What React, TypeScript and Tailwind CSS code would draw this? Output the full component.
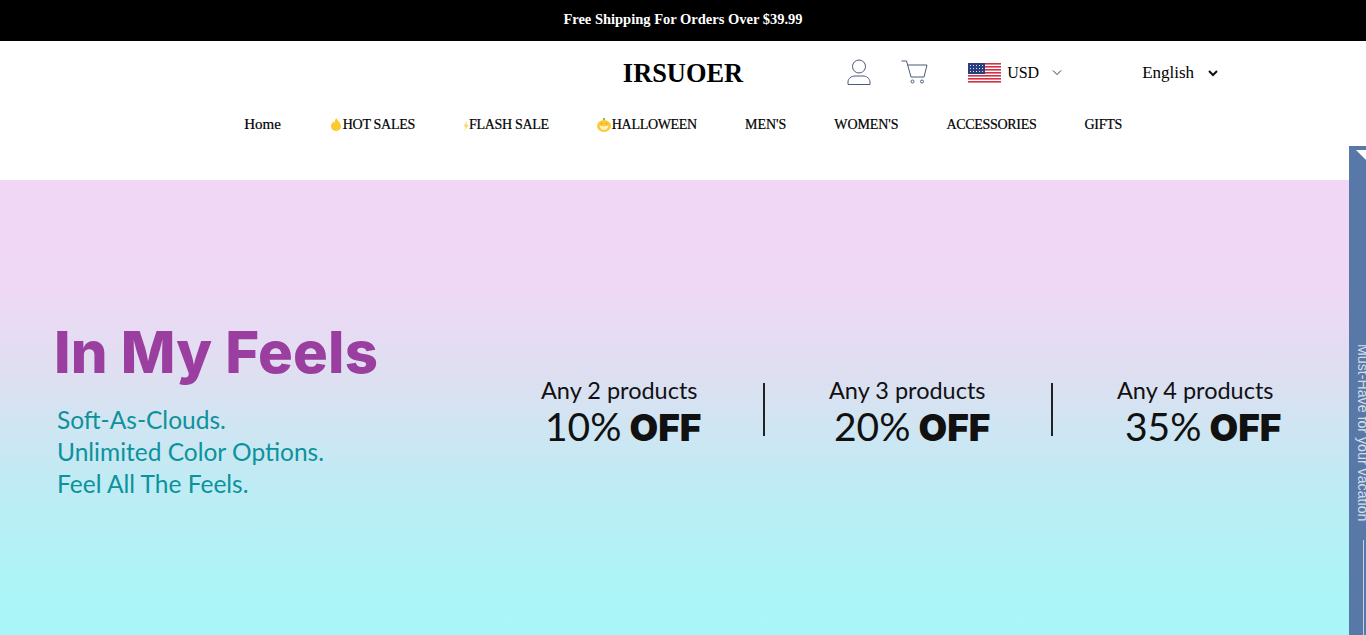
import React from 'react';

const serif = "font-['Liberation_Serif',serif]";

const navItems = [
  { label: 'Home', icon: null, style: 'text-[15px] leading-[18px]' },
  { label: 'HOT SALES', icon: 'fire', style: 'text-[14px] leading-[20px] tracking-[-0.3px]' },
  { label: 'FLASH SALE', icon: 'bolt', style: 'text-[14px] leading-[20px] tracking-[-0.3px]' },
  { label: 'HALLOWEEN', icon: 'pumpkin', style: 'text-[14px] leading-[20px] tracking-[-0.3px]' },
  { label: "MEN'S", icon: null, style: 'text-[14px] leading-[20px]' },
  { label: "WOMEN'S", icon: null, style: 'text-[14px] leading-[20px] tracking-[-0.1px]' },
  { label: 'ACCESSORIES', icon: null, style: 'text-[14px] leading-[20px] tracking-[-0.3px]' },
  { label: 'GIFTS', icon: null, style: 'text-[14px] leading-[20px] tracking-[-0.3px]' },
];

const offers = [
  { title: 'Any 2 products', percent: '10%', indent: 'pl-[4px]' },
  { title: 'Any 3 products', percent: '20%', indent: 'pl-[5px]' },
  { title: 'Any 4 products', percent: '35%', indent: 'pl-[8px]' },
];

const NavIcon = ({ name }: { name: string | null }) => {
  if (name === 'fire') {
    return (
      <svg width="10" height="13" viewBox="0 0 10 13" className="ml-[2px] mr-[2px] -mt-[1px]">
        <path d="M5.500 0C5.500 2 10 4.500 10 8.300 10 11 7.800 13 5 13 2.200 13 0 11 0 8.300 0 6 1.400 4.800 2.300 3.600 2.600 4.500 3 4.900 3.500 5 3.600 3 4.200 1 5.500 0Z" fill="#fdc92f" />
      </svg>
    );
  }
  if (name === 'bolt') {
    return (
      <svg width="6" height="10" viewBox="0 0 7 10" preserveAspectRatio="none" className="mt-[2px]">
        <path d="M5 0 0.500 5.500H3L1.500 10 6.500 4H4Z" fill="#fcd75f" />
      </svg>
    );
  }
  if (name === 'pumpkin') {
    return (
      <svg width="14" height="14" viewBox="0 0 14 14" className="mr-[1px]">
        <rect x="6" y="0" width="2" height="3" fill="#7ac943" />
        <ellipse cx="7" cy="8" rx="7" ry="6" fill="#fdc93a" />
        <path d="M2.500 7.500C4 8.500 10 8.500 11.500 7.500 11 10.500 9 12 7 12 5 12 3 10.500 2.500 7.500Z" fill="#fff3c4" />
        <circle cx="4.500" cy="5.500" r="0.900" fill="#e8a317" />
        <circle cx="9.500" cy="5.500" r="0.900" fill="#e8a317" />
      </svg>
    );
  }
  return null;
};

const UsFlag = () => (
  <svg width="33" height="21" viewBox="0 0 33 21">
    <rect width="33" height="21" fill="#fff" />
    {[0, 3, 6, 9, 12, 15, 18].map((y) => (
      <rect key={y} y={y} width="33" height="1.600" fill="#d22f45" />
    ))}
    <rect width="17" height="11" fill="#2b3f7e" />
    {[2, 5, 8].map((y) =>
      [2, 5, 8, 11, 14].map((x) => <rect key={`${x}-${y}`} x={x} y={y} width="1" height="1" fill="#dfe4f2" />),
    )}
  </svg>
);

const Header = () => (
  <header className={`h-[139px] bg-white text-black ${serif}`}>
    <div className="grid grid-cols-[1fr_auto_1fr] items-center pt-[14px]">
      <div />
      <h1 className="text-[26.400px] font-bold leading-[36px] text-black">IRSUOER</h1>
      <div className="flex items-center pl-[104px]">
        <svg width="24" height="26" viewBox="0 0 24 26" fill="none" stroke="#4b5a78" strokeWidth="1" className="-mt-[2px]">
          <circle cx="12" cy="7.500" r="6.500" />
          <path d="M1 25.500V23C1 19.500 4.500 17 8 17H16C19.500 17 23 19.500 23 23V25.500Z" />
        </svg>
        <svg width="27" height="24" viewBox="0 0 27 24" fill="none" stroke="#4b5a78" strokeWidth="1" className="-mt-[2px] ml-[30px]">
          <path d="M0.500 1H5.500L10 17H23L26 5H6.500" />
          <circle cx="11.500" cy="21.500" r="1.500" />
          <circle cx="21" cy="21.500" r="1.500" />
        </svg>
        <div className="ml-[40px] flex items-center">
          <UsFlag />
          <span className="ml-[6px] text-[16px] leading-5">USD</span>
          <svg width="10" height="6" viewBox="0 0 10 6" fill="none" stroke="#333" strokeWidth="1" className="ml-[13px]">
            <path d="M1 0.500 5 4.500 9 0.500" />
          </svg>
        </div>
        <span className="ml-[80px] text-[17px] leading-5">English</span>
        <svg width="10" height="7" viewBox="0 0 10 7" fill="none" stroke="#111" strokeWidth="2" className="ml-[14px]">
          <path d="M1 1 5 5 9 1" />
        </svg>
      </div>
    </div>
    <nav className="mt-[24px] flex items-start justify-center gap-12">
      {navItems.map((item) => (
        <a
          key={item.label}
          className={`flex items-center text-black [-webkit-text-stroke:0.2px_#000] ${item.style}`}
        >
          <NavIcon name={item.icon} />
          {item.label}
        </a>
      ))}
    </nav>
  </header>
);

const Banner = () => (
  <section className="flex h-[455px] bg-[linear-gradient(180deg,#f0d7f5_0%,#efd8f5_24%,#dde0f1_44%,#c0ebf4_66%,#adf4f7_88%,#a9f6f8_100%)] font-['Lato',sans-serif]">
    <div className="w-[485px] shrink-0 pl-[54px] pt-[137px]">
      <h2 className="whitespace-nowrap font-['Inter',sans-serif] text-[58px] font-extrabold leading-[70px] tracking-[0.2px] text-[#9a3f9f]">
        In My Feels
      </h2>
      <div className="mt-[17px] pl-[3px] text-[24.500px] leading-[32px] text-[#0d929c]">
        <p>Soft-As-Clouds.</p>
        <p>Unlimited Color Options.</p>
        <p>Feel All The Feels.</p>
      </div>
    </div>
    <div className="flex pl-[56px] pt-[196px]">
      {offers.map((offer, index) => (
        <React.Fragment key={offer.title}>
          {index > 0 && <div className="mx-[64px] mt-[7px] h-[53px] w-[2px] bg-[#222]" />}
          <div className="w-[158px] whitespace-nowrap text-[#111]">
            <p className="text-[23.500px] leading-[28px]">{offer.title}</p>
            <p className={`mt-[1px] text-[39px] leading-[42px] ${offer.indent}`}>
              {offer.percent}{' '}
              <span className="-ml-[2px] font-['Inter',sans-serif] text-[37px] font-black">OFF</span>
            </p>
          </div>
        </React.Fragment>
      ))}
    </div>
  </section>
);

const SideTab = () => (
  <aside className="absolute right-0 top-[146px] h-[489px] w-[17px] overflow-hidden bg-[#5878a8]">
    <div className="absolute left-[7px] top-[4px] h-0 w-0 border-x-[10px] border-t-[10px] border-x-transparent border-t-white" />
    <span className="absolute left-[6px] top-[198px] whitespace-nowrap font-['Liberation_Sans',sans-serif] text-[14.200px] leading-[16px] text-[#d5dde9] [writing-mode:vertical-rl]">
      Must-Have for your vacation
    </span>
    <div className="absolute left-[14px] top-[394px] h-[95px] w-[1px] bg-[#c5d0e2]" />
  </aside>
);

export default function App() {
  return (
    <div className="relative h-[635px] overflow-hidden bg-white">
      <div className={`flex h-[41px] items-center justify-center bg-black pb-[2px] text-[14.500px] font-bold text-white ${serif}`}>
        Free Shipping For Orders Over $39.99
      </div>
      <Header />
      <Banner />
      <SideTab />
    </div>
  );
}
